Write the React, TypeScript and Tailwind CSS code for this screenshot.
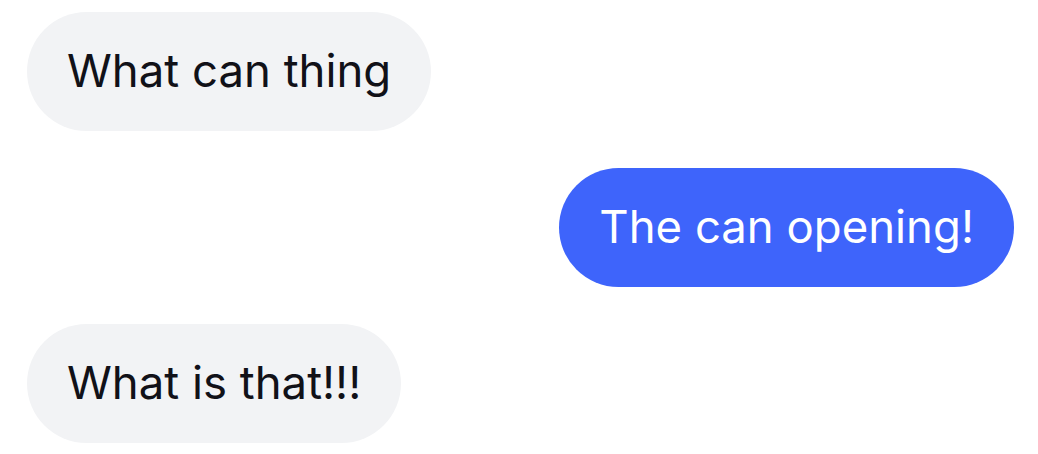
const messages = [
  { id: 1, text: "What can thing", mine: false },
  { id: 2, text: "The can opening!", mine: true },
  { id: 3, text: "What is that!!!", mine: false },
];

export default function App() {
  return (
    <div
      className="w-[1038px] h-[454px] bg-white flex flex-col gap-[37px] pt-[12px] pl-[27px] pr-[24px]"
      style={{ fontFamily: "Inter, 'Noto Sans', sans-serif" }}
    >
      {messages.map((m) => (
        <div key={m.id} className={m.mine ? "flex justify-end" : "flex justify-start"}>
          <div
            className={
              m.mine
                ? "h-[119px] flex items-center px-[40px] pb-[2px] rounded-full bg-[#3e64fb] text-white text-[45.5px] leading-none"
                : "h-[119px] flex items-center px-[40px] pb-[2px] rounded-full bg-[#f2f3f5] text-[#111118] text-[45.5px] leading-none"
            }
          >
            {m.text}
          </div>
        </div>
      ))}
    </div>
  );
}
